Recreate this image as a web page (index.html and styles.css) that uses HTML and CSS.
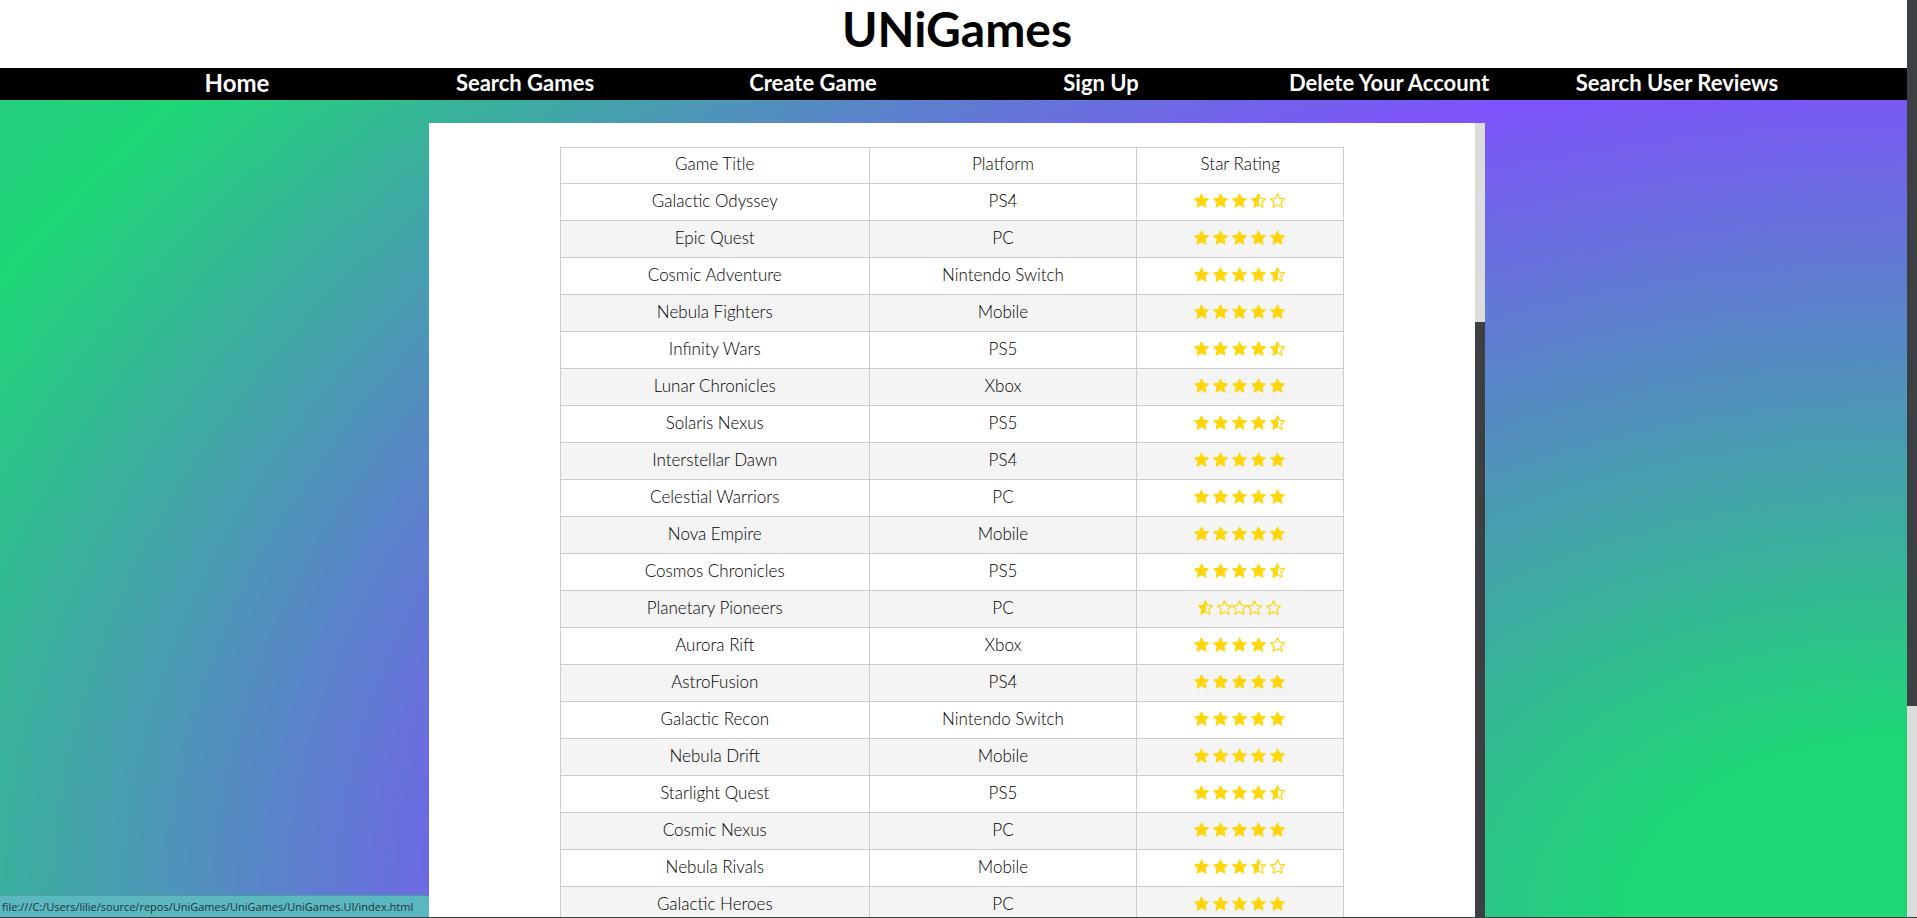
FILE: index.html
```html
<!DOCTYPE html>
<html lang="en">
<head>
<meta charset="utf-8">
<title>UNiGames</title>
<link rel="stylesheet" href="styles.css">
</head>
<body>
<div class="page">
<div class="content">
<header class="masthead"><h1>UNiGames</h1></header>
<nav class="menu">
<a class="active" href="#">Home</a>
<a href="#">Search Games</a>
<a href="#">Create Game</a>
<a href="#">Sign Up</a>
<a href="#">Delete Your Account</a>
<a href="#">Search User Reviews</a>
</nav>
<main class="stage">
<section class="panel">
<div class="panel-body">
<table class="games">
<thead><tr><th>Game Title</th><th>Platform</th><th>Star Rating</th></tr></thead>
<tbody id="games"></tbody>
</table>
</div>
<div class="scroll panel-scroll"><div class="scroll-thumb"></div></div>
</section>
</main>
</div>
<div class="scroll page-scroll"><div class="scroll-thumb"></div></div>
</div>
<svg class="defs" width="0" height="0" aria-hidden="true">
<symbol id="star" viewBox="0 0 16 16"><path fill="currentColor" stroke="currentColor" stroke-linejoin="round" d="M7.500.8l2.100 4.500 5 .6-3.700 3.400 1.100 5L7.500 11.800l-4.500 2.500 1.100-5L.4 5.900l5-.6z"/></symbol>
<symbol id="empty" viewBox="0 0 16 16"><path fill="none" stroke="currentColor" stroke-width="1.200" stroke-linejoin="round" d="M7.500.8l2.100 4.500 5 .6-3.700 3.400 1.100 5L7.500 11.800l-4.500 2.500 1.100-5L.6 5.900l4.800-.6z"/></symbol>
<symbol id="half" viewBox="0 0 16 16"><path fill="none" stroke="currentColor" stroke-width="1.200" stroke-linejoin="round" d="M7.500.8l2.100 4.500 5 .6-3.700 3.400 1.100 5L7.500 11.800l-4.500 2.500 1.100-5L.6 5.900l4.800-.6z"/><path fill="currentColor" d="M8 .8v11L3 14.300l1.100-5L.6 5.900l4.800-.6L7.500.8z"/></symbol>
</svg>
<div class="status">file:///C:/Users/lilie/source/repos/UniGames/UniGames/UniGames.UI/index.html</div>
<script src="games.js"></script>
</body>
</html>
```
FILE: styles.css
```css
* { box-sizing: border-box; }
body {
  margin: 0;
  font-family: Lato, "Open Sans", sans-serif;
  color: #000;
}
.page {
  display: flex;
  height: 100vh;
  overflow: hidden;
  border-bottom: 1px solid #3c4043;
}
.content {
  flex: 1;
  display: flex;
  flex-direction: column;
  min-width: 0;
}
.masthead {
  flex: none;
  height: 68px;
  text-align: center;
  background: #fff;
}
.masthead h1 {
  margin: 0;
  font-size: 48px;
  line-height: 58px;
  padding-left: 7px;
}
.menu {
  flex: none;
  display: grid;
  grid-template-columns: repeat(6, 1fr);
  padding: 0 86px 0 93px;
  height: 32px;
  background: #000;
  text-align: center;
}
.menu a {
  color: #fff;
  font-size: 22px;
  font-weight: 700;
  line-height: 29px;
  text-decoration: none;
  white-space: nowrap;
}
.menu .active { font-size: 24px; line-height: 29px; }
.stage {
  flex: 1;
  min-height: 0;
  padding: 23px 0 0 7px;
  background: radial-gradient(70% 104% at 100% 100%, #1ed776 0%, #1ed776 21%, #7d53fa 100%, #1ed776 161%, #7d53fa 320%);
}
.panel {
  display: flex;
  width: 1056px;
  max-width: 100%;
  height: 100%;
  margin: 0 auto;
  background: #fff;
  overflow: hidden;
}
.panel-body { flex: 1; padding: 24px 0 0; overflow: hidden; }
.games {
  width: 75%;
  margin: 0 auto;
  border-collapse: collapse;
  text-align: center;
  font-size: 17px;
  line-height: 20px;
}
.games th, .games td {
  height: 37px;
  padding: 0 0 3px;
  border: 1px solid #ccc;
  font-weight: 300;
}
.games th { height: 36px; }
.games th:first-child { width: 309px; }
.games th:last-child { width: 207px; }
.games tbody tr:nth-child(even) { background: #f4f4f4; }
.stars {
  display: flex;
  justify-content: center;
  gap: 3px;
  color: #ffd60a;
}
.stars svg { width: 16px; height: 16px; }
.stars .tight { margin-left: -4px; }
.scroll { flex: none; background: #dcdcdc; display: flex; flex-direction: column; }
.scroll-thumb { background: #3c4043; }
.page-scroll { width: 10px; }
.page-scroll .scroll-thumb { height: 77%; }
.panel-scroll { width: 10px; justify-content: flex-end; }
.panel-scroll .scroll-thumb { height: 75%; }
.defs { position: absolute; }
.status {
  position: absolute;
  left: 0;
  bottom: 1px;
  padding: 0 16px 0 2px;
  height: 22px;
  border-top: 1px solid #4a9ea8;
  border-top-right-radius: 3px;
  background: #5bb8c0;
  color: #1c333a;
  font: 11px/21px "Open Sans", sans-serif;
}
```
FILE: games.js
```js
const games = [
  ["Galactic Odyssey", "PS4", 3.5], ["Epic Quest", "PC", 5],
  ["Cosmic Adventure", "Nintendo Switch", 4.5], ["Nebula Fighters", "Mobile", 5],
  ["Infinity Wars", "PS5", 4.5], ["Lunar Chronicles", "Xbox", 5],
  ["Solaris Nexus", "PS5", 4.5], ["Interstellar Dawn", "PS4", 5],
  ["Celestial Warriors", "PC", 5], ["Nova Empire", "Mobile", 5],
  ["Cosmos Chronicles", "PS5", 4.5], ["Planetary Pioneers", "PC", 0.5],
  ["Aurora Rift", "Xbox", 4], ["AstroFusion", "PS4", 5],
  ["Galactic Recon", "Nintendo Switch", 5], ["Nebula Drift", "Mobile", 5],
  ["Starlight Quest", "PS5", 4.5], ["Cosmic Nexus", "PC", 5],
  ["Nebula Rivals", "Mobile", 3.5], ["Galactic Heroes", "PC", 5]
];
document.getElementById("games").innerHTML = games.map(([title, platform, score]) => {
  let stars = "";
  for (let i = 0; i < 5; i++) {
    const kind = score >= i + 1 ? "star" : score > i ? "half" : "empty";
    const tight = score < 1 && (i === 2 || i === 3) ? ' class="tight"' : "";
    stars += `<svg${tight}><use href="#${kind}"/></svg>`;
  }
  return `<tr><td>${title}</td><td>${platform}</td><td><div class="stars" role="img" aria-label="${score} stars">${stars}</div></td></tr>`;
}).join("");
```
